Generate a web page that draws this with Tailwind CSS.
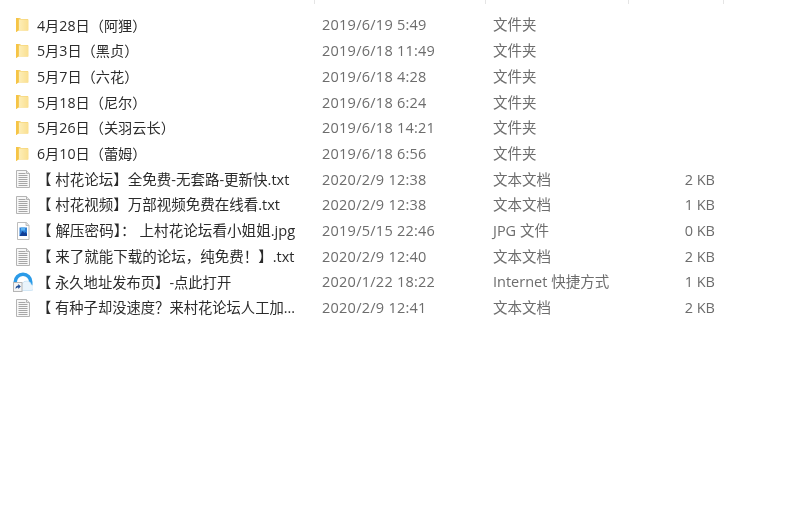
<!DOCTYPE html>
<html lang="zh">
<head>
<meta charset="utf-8">
<script src="https://cdn.jsdelivr.net/npm/@tailwindcss/browser@4"></script>
</head>
<body class="bg-white">
<svg width="0" height="0" class="absolute">
  <defs>
    <linearGradient id="fg" x1="0" y1="0" x2="1" y2="0"><stop offset="0" stop-color="#fdeeb8"/><stop offset="1" stop-color="#fadf8f"/></linearGradient>
    <symbol id="folder" viewBox="0 0 14 16">
      <path d="M1 1h4l1 1h7v11.500H3.500L1 15z" fill="#f5d06a"/>
      <path d="M4 2.500h9.500v11H4z" fill="url(#fg)"/>
      <path d="M1 1h2.500v12.500L1 15z" fill="#f6c445"/>
    </symbol>
    <symbol id="txt" viewBox="0 0 16 18">
      <path d="M1.500 .5h10l3 3v14h-13z" fill="#f7f7f7" stroke="#b4b4b4"/>
      <path d="M11.500 .5v3h3" fill="#e6e6e6" stroke="#b4b4b4"/>
      <path d="M3.500 3.500h7M3.500 5.500h9M3.500 7.500h9M3.500 9.500h9M3.500 11.500h9M3.500 13.500h9M3.500 15.500h9" stroke="#a6a6a6"/>
    </symbol>
    <symbol id="jpg" viewBox="0 0 16 18">
      <path d="M2.500 .5h9l2.500 3v14h-11.500z" fill="#fff" stroke="#bdbdbd"/>
      <path d="M11 .5v3h3" fill="#e4e4e4" stroke="#bdbdbd"/>
      <rect x="4.500" y="5.500" width="7.500" height="8.500" fill="#2f7fd6"/>
      <path d="M4.500 14l3-5 2 2 1-1 1.500 2v2z" fill="#123f96"/>
      <rect x="6" y="5.500" width="4" height="3" fill="#5fb4f0"/>
    </symbol>
    <symbol id="link" viewBox="0 0 20 20">
      <path d="M10 0.500a9.500 9.500 0 0 1 9.500 9.500v3h-3.500v-3a6 6 0 0 0-12 0v1H.5v-1a9.500 9.500 0 0 1 9.500-9.500z" fill="#2b9be8"/>
      <path d="M6 18.500h12a2.500 2.500 0 0 0 .5-5.500 5 5 0 0 0-9.500-1 3.500 3.500 0 0 0-3 6.500z" fill="#eaf4fb" stroke="#bcdcf1" stroke-width=".6"/>
      <rect x=".5" y="10.500" width="8.500" height="9" fill="#f4f4f4" stroke="#b5b5b5"/>
      <path d="M2.500 17.500c0-3 1-4 2.800-4v-1.500l2.500 2.500-2.500 2.500v-1.500c-1.300 0-1.800.5-2.800 1.500z" fill="#1f4f99"/>
    </symbol>
  </defs>
</svg>
<div class="relative w-[800px] h-[512px] overflow-hidden blur-[0.35px] text-[14.5px] font-['Open_Sans','Noto_Sans_CJK_SC',sans-serif]">
  <div class="flex h-[4px]">
    <div class="w-[315px] border-r border-[#e5e5e5]"></div>
    <div class="w-[171px] border-r border-[#e5e5e5]"></div>
    <div class="w-[143px] border-r border-[#e5e5e5]"></div>
    <div class="w-[95px] border-r border-[#e5e5e5]"></div>
  </div>
  <div class="pt-[8.5px] grid grid-cols-[322px_171px_137px_85px] auto-rows-[25.7px] items-center text-[#6d6d6d]">

    <div class="flex items-center text-[#2b2b2b] text-[14.2px]"><svg class="w-[14px] h-[16px] ml-[15px] mr-[8px]"><use href="#folder"/></svg><span>4月28日（阿狸）</span></div><div class="tracking-[0.25px]">2019/6/19 5:49</div><div>文件夹</div><div></div>
    <div class="flex items-center text-[#2b2b2b] text-[14.2px]"><svg class="w-[14px] h-[16px] ml-[15px] mr-[8px]"><use href="#folder"/></svg><span>5月3日（黑贞）</span></div><div class="tracking-[0.25px]">2019/6/18 11:49</div><div>文件夹</div><div></div>
    <div class="flex items-center text-[#2b2b2b] text-[14.2px]"><svg class="w-[14px] h-[16px] ml-[15px] mr-[8px]"><use href="#folder"/></svg><span>5月7日（六花）</span></div><div class="tracking-[0.25px]">2019/6/18 4:28</div><div>文件夹</div><div></div>
    <div class="flex items-center text-[#2b2b2b] text-[14.2px]"><svg class="w-[14px] h-[16px] ml-[15px] mr-[8px]"><use href="#folder"/></svg><span>5月18日（尼尔）</span></div><div class="tracking-[0.25px]">2019/6/18 6:24</div><div>文件夹</div><div></div>
    <div class="flex items-center text-[#2b2b2b] text-[14.2px]"><svg class="w-[14px] h-[16px] ml-[15px] mr-[8px]"><use href="#folder"/></svg><span>5月26日（关羽云长）</span></div><div class="tracking-[0.25px]">2019/6/18 14:21</div><div>文件夹</div><div></div>
    <div class="flex items-center text-[#2b2b2b] text-[14.2px]"><svg class="w-[14px] h-[16px] ml-[15px] mr-[8px]"><use href="#folder"/></svg><span>6月10日（蕾姆）</span></div><div class="tracking-[0.25px]">2019/6/18 6:56</div><div>文件夹</div><div></div>

    <div class="flex items-center text-[#2b2b2b]"><svg class="w-[16px] h-[18px] ml-[15px] mr-[6px]"><use href="#txt"/></svg><span>【 村花论坛】全免费-无套路-更新快.txt</span></div><div class="tracking-[0.25px]">2020/2/9 12:38</div><div>文本文档</div><div class="text-right">2 KB</div>
    <div class="flex items-center text-[#2b2b2b]"><svg class="w-[16px] h-[18px] ml-[15px] mr-[6px]"><use href="#txt"/></svg><span>【 村花视频】万部视频免费在线看.txt</span></div><div class="tracking-[0.25px]">2020/2/9 12:38</div><div>文本文档</div><div class="text-right">1 KB</div>
    <div class="flex items-center text-[#2b2b2b] text-[14.6px]"><svg class="w-[16px] h-[18px] ml-[15px] mr-[6px]"><use href="#jpg"/></svg><span>【 解压密码】： 上村花论坛看小姐姐.jpg</span></div><div class="tracking-[0.25px]">2019/5/15 22:46</div><div>JPG 文件</div><div class="text-right">0 KB</div>
    <div class="flex items-center text-[#2b2b2b]"><svg class="w-[16px] h-[18px] ml-[15px] mr-[6px]"><use href="#txt"/></svg><span>【 来了就能下载的论坛，纯免费！】.txt</span></div><div class="tracking-[0.25px]">2020/2/9 12:40</div><div>文本文档</div><div class="text-right">2 KB</div>
    <div class="flex items-center text-[#2b2b2b] text-[14.3px]"><svg class="w-[20px] h-[20px] ml-[13px] mr-[4px]"><use href="#link"/></svg><span>【 永久地址发布页】-点此打开</span></div><div class="tracking-[0.25px]">2020/1/22 18:22</div><div>Internet 快捷方式</div><div class="text-right">1 KB</div>
    <div class="flex items-center text-[#2b2b2b] text-[14.3px]"><svg class="w-[16px] h-[18px] ml-[15px] mr-[6px]"><use href="#txt"/></svg><span>【 有种子却没速度？来村花论坛人工加...</span></div><div class="tracking-[0.25px]">2020/2/9 12:41</div><div>文本文档</div><div class="text-right">2 KB</div>
  </div>
</div>
</body>
</html>
